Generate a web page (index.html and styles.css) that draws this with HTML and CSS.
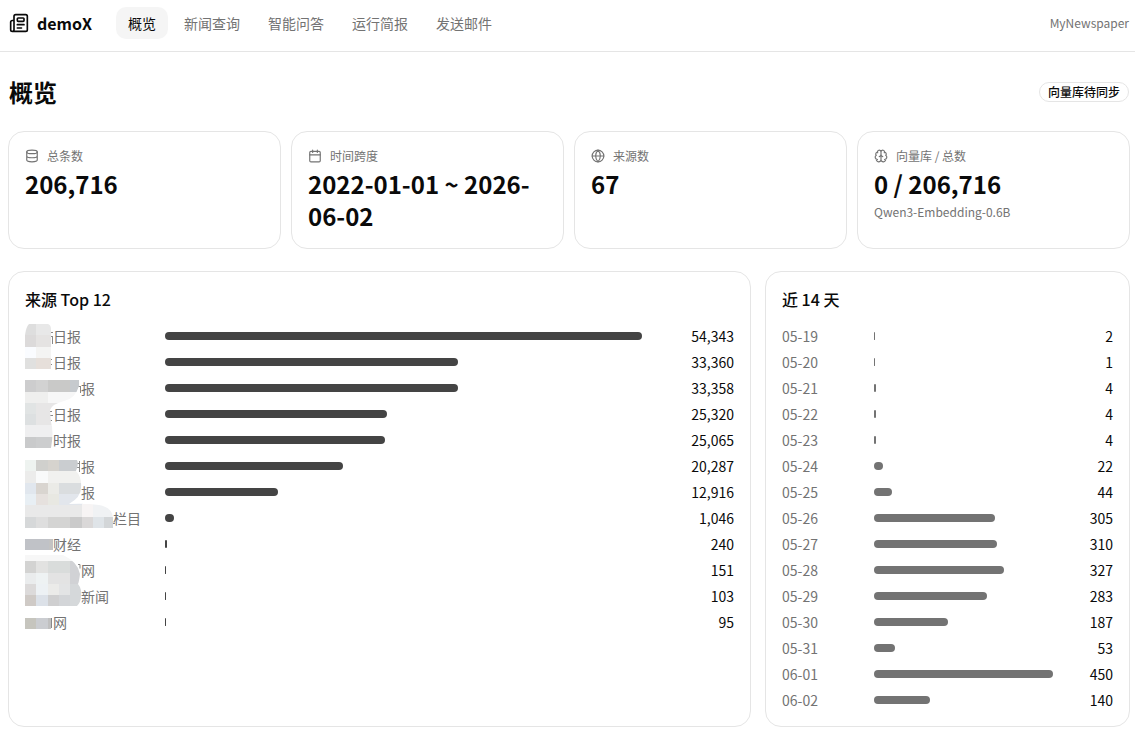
FILE: index.html
```html
<!DOCTYPE html>
<html lang="zh-CN">
<head>
<meta charset="utf-8">
<meta name="viewport" content="width=device-width, initial-scale=1">
<title>demoX</title>
<link rel="stylesheet" href="styles.css">
</head>
<body>
<header class="topbar">
  <a class="brand" href="#">
    <svg class="icon brand-icon" viewBox="0 0 24 24" aria-hidden="true"><path d="M15 18h-5M18 14h-8M4 22h16a2 2 0 0 0 2-2V4a2 2 0 0 0-2-2H8a2 2 0 0 0-2 2v16a2 2 0 0 1-4 0v-9a2 2 0 0 1 2-2h2"/><rect width="8" height="4" x="10" y="6" rx="1"/></svg>
    <span>demoX</span>
  </a>
  <nav class="nav">
    <a class="nav-link active" href="#">概览</a>
    <a class="nav-link" href="#">新闻查询</a>
    <a class="nav-link" href="#">智能问答</a>
    <a class="nav-link" href="#">运行简报</a>
    <a class="nav-link" href="#">发送邮件</a>
  </nav>
  <span class="product">MyNewspaper</span>
</header>
<main class="page">
  <div class="page-head">
    <h1 class="page-title">概览</h1>
    <span class="badge">向量库待同步</span>
  </div>
  <section class="stats">
    <article class="card">
      <div class="stat-label"><svg class="icon" viewBox="0 0 24 24" aria-hidden="true"><ellipse cx="12" cy="5" rx="9" ry="3"/><path d="M3 5v14a9 3 0 0 0 18 0V5M3 12a9 3 0 0 0 18 0"/></svg>总条数</div>
      <div class="stat-value">206,716</div>
    </article>
    <article class="card">
      <div class="stat-label"><svg class="icon" viewBox="0 0 24 24" aria-hidden="true"><path d="M8 2v4M16 2v4M3 10h18"/><rect width="18" height="18" x="3" y="4" rx="2"/></svg>时间跨度</div>
      <div class="stat-value">2022-01-01 ~ 2026-06-02</div>
    </article>
    <article class="card">
      <div class="stat-label"><svg class="icon" viewBox="0 0 24 24" aria-hidden="true"><circle cx="12" cy="12" r="10"/><path d="M12 2a14.500 14.500 0 0 0 0 20 14.500 14.500 0 0 0 0-20M2 12h20"/></svg>来源数</div>
      <div class="stat-value">67</div>
    </article>
    <article class="card">
      <div class="stat-label"><svg class="icon" viewBox="0 0 24 24" aria-hidden="true"><path d="M12 18V5M15 13a4.170 4.170 0 0 1-3-4 4.170 4.170 0 0 1-3 4M17.598 6.500A3 3 0 1 0 12 5a3 3 0 1 0-5.598 1.500M17.997 5.125a4 4 0 0 1 2.526 5.770M18 18a4 4 0 0 0 2-7.464M19.967 17.483A4 4 0 1 1 12 18a4 4 0 1 1-7.967-.517M6 18a4 4 0 0 1-2-7.464M6.003 5.125a4 4 0 0 0-2.526 5.770"/></svg>向量库 / 总数</div>
      <div class="stat-value">0 / 206,716</div>
      <div class="stat-note">Qwen3-Embedding-0.6B</div>
    </article>
  </section>
  <section class="panels">
    <article class="card">
      <h2 class="panel-title">来源 Top 12</h2>
      <div class="masked">
      <ul class="bars sources">
        <li class="row"><span class="name skip-2">日报</span><span class="track"><span class="bar" style="width:100%"></span></span><span class="num">54,343</span></li>
        <li class="row"><span class="name skip-2">日报</span><span class="track"><span class="bar" style="width:61.39%"></span></span><span class="num">33,360</span></li>
        <li class="row"><span class="name skip-4">报</span><span class="track"><span class="bar" style="width:61.38%"></span></span><span class="num">33,358</span></li>
        <li class="row"><span class="name skip-2">日报</span><span class="track"><span class="bar" style="width:46.59%"></span></span><span class="num">25,320</span></li>
        <li class="row"><span class="name skip-2">时报</span><span class="track"><span class="bar" style="width:46.12%"></span></span><span class="num">25,065</span></li>
        <li class="row"><span class="name skip-4">报</span><span class="track"><span class="bar" style="width:37.33%"></span></span><span class="num">20,287</span></li>
        <li class="row"><span class="name skip-4">报</span><span class="track"><span class="bar" style="width:23.77%"></span></span><span class="num">12,916</span></li>
        <li class="row"><span class="name skip-6">栏目</span><span class="track"><span class="bar" style="width:1.92%"></span></span><span class="num">1,046</span></li>
        <li class="row"><span class="name skip-2">财经</span><span class="track"><span class="bar" style="width:0.44%"></span></span><span class="num">240</span></li>
        <li class="row"><span class="name skip-4">网</span><span class="track"><span class="bar" style="width:0.28%"></span></span><span class="num">151</span></li>
        <li class="row"><span class="name skip-4">新闻</span><span class="track"><span class="bar" style="width:0.19%"></span></span><span class="num">103</span></li>
        <li class="row"><span class="name skip-2">网</span><span class="track"><span class="bar" style="width:0.17%"></span></span><span class="num">95</span></li>
      </ul>
      <svg class="mosaic" viewBox="0 0 120 308" width="120" height="308" aria-hidden="true">
        <defs>
          <clipPath id="m1"><path d="M4 0H23Q26 1 26 5V45H0V11Q1 3 4 0Z"/></clipPath>
          <clipPath id="m2"><path d="M0 56H54V62Q50 75 39 77Q27 80 25 86L26 98Q29 108 26 124H0Z"/></clipPath>
          <clipPath id="m3"><path d="M0 136H52Q54 140 51 147Q57 153 56 164Q56 173 44 180Q60 179 74 181Q89 184 88 196V204H0Z"/></clipPath>
          <clipPath id="m4"><path d="M0 231H38Q53 238 55 250Q54 258 53 260Q57 265 56 272Q56 278 52 282H0Z"/></clipPath>
        </defs>
        <g stroke="#888" fill="none"><path d="M25 8.500h3M25 12.500h3M27.500 13v7M25 35.500h2M25 40.500h2M53 62.500h3M55.500 62v7M25 87.500h2M25 91.500h3M25 96.500h2M51 139.500h4M50 143.500h5M54.500 137v11M88 199.500h2M53 240.500h2v4M25 294.500h2M26.500 295v9"/></g>
        <g clip-path="url(#m1)"><path fill="#dedede" d="M0 0h11v11H0z"/><path fill="#e8e8e8" d="M11 0h15v11H11z"/><path fill="#dcdada" d="M0 11h11v12H0z"/><path fill="#e5e3e2" d="M11 11h15v12H11z"/><path fill="#fafcff" d="M0 23h11v11H0z"/><path fill="#f4f4f3" d="M11 23h15v11H11z"/><path fill="#e0e0df" d="M0 34h11v11H0z"/><path fill="#e6dfda" d="M11 34h15v11H11z"/></g>
        <g clip-path="url(#m2)"><path fill="#cdcdce" d="M0 56h11v12H0z"/><path fill="#d2d2d2" d="M11 56h12v12H11z"/><path fill="#c9c9c8" d="M23 56h22v12H23z"/><path fill="#c6cace" d="M45 56h9v12h-9z"/><path fill="#efefee" d="M0 68h23v11H0z"/><path fill="#f7f7f7" d="M23 68h31v11H23z"/><path fill="#e1e4e4" d="M0 79h11v11H0z"/><path fill="#e7e6e6" d="M11 79h28v22H11z"/><path fill="#dde0e1" d="M0 90h11v11H0z"/><path fill="#efeff0" d="M0 101h28v12H0z"/><path fill="#c9cacb" d="M0 113h11v11H0z"/><path fill="#cccdce" d="M11 113h17v11H11z"/></g>
        <g clip-path="url(#m3)"><path fill="#eef3f0" d="M0 136h11v11H0z"/><path fill="#d0d0cd" d="M11 136h12v11H11z"/><path fill="#d6d3ce" d="M23 136h11v11H23z"/><path fill="#cacdd0" d="M34 136h20v11H34z"/><path fill="#ececeb" d="M0 147h11v12H0z"/><path fill="#f9fafa" d="M11 147h12v12H11z"/><path fill="#f1f1ef" d="M23 147h34v12H23z"/><path fill="#e1e7ee" d="M0 159h11v11H0z"/><path fill="#d9d5d0" d="M11 159h12v11H11z"/><path fill="#ebebe7" d="M23 159h11v11H23z"/><path fill="#dadddf" d="M34 159h24v11H34z"/><path fill="#e8eff4" d="M0 170h11v11H0z"/><path fill="#e6e1de" d="M11 170h12v11H11z"/><path fill="#e8e8e2" d="M23 170h11v11H23z"/><path fill="#e2e6ec" d="M34 170h24v11H34z"/><path fill="#e9e9e9" d="M0 181h57v12H0z"/><path fill="#f7f4f4" d="M57 180h11v13H57z"/><path fill="#f0f2f4" d="M68 180h21v13H68z"/><path fill="#d6d8d9" d="M0 193h11v11H0z"/><path fill="#dedede" d="M11 193h12v11H11z"/><path fill="#d4d4d3" d="M23 193h22v11H23z"/><path fill="#cacaca" d="M45 193h12v11H45z"/><path fill="#dad8d8" d="M57 193h11v11H57z"/><path fill="#dfe4e8" d="M68 193h11v11H68z"/><path fill="#d3d6d8" d="M79 193h10v11H79z"/></g>
        <path fill="#c0c2c7" d="M0 215h24v11H0z"/><path fill="#c3c3c3" d="M24 215h4v11h-4z"/>
        <g clip-path="url(#m4)"><path fill="#d3d3d2" d="M0 237h11v12H0z"/><path fill="#e2e2e1" d="M11 237h12v12H11z"/><path fill="#d9dcdb" d="M23 237h22v12H23z"/><path fill="#d1d2d5" d="M45 237h12v23H45z"/><path fill="#f7f7f7" d="M0 231h53v6H0z"/><path fill="#eaeced" d="M0 249h11v11H0z"/><path fill="#eef2f3" d="M11 249h12v11H11z"/><path fill="#e3e3e3" d="M23 249h22v11H23z"/><path fill="#dcdada" d="M0 260h11v11H0z"/><path fill="#edf1f4" d="M11 260h12v11H11z"/><path fill="#ebebe9" d="M23 260h11v11H23z"/><path fill="#e3e4e5" d="M34 260h11v11H34z"/><path fill="#d5d8da" d="M45 260h12v22H45z"/><path fill="#cfcac6" d="M0 271h11v11H0z"/><path fill="#dce1e8" d="M11 271h12v11H11z"/><path fill="#cfcfd0" d="M23 271h11v11H23z"/><path fill="#d3d5d8" d="M34 271h11v11H34z"/></g>
        <path fill="#c6c5be" d="M0 294h11v11H0z"/><path fill="#cbcdd1" d="M11 294h12v11H11z"/><path fill="#c0c0c0" d="M23 294h3v11h-3z"/>
      </svg>
      </div>
    </article>
    <article class="card">
      <h2 class="panel-title">近 14 天</h2>
      <ul class="bars days">
        <li class="row"><span class="name">05-19</span><span class="track"><span class="bar" style="width:0.44%"></span></span><span class="num">2</span></li>
        <li class="row"><span class="name">05-20</span><span class="track"><span class="bar" style="width:0.22%"></span></span><span class="num">1</span></li>
        <li class="row"><span class="name">05-21</span><span class="track"><span class="bar" style="width:0.89%"></span></span><span class="num">4</span></li>
        <li class="row"><span class="name">05-22</span><span class="track"><span class="bar" style="width:0.89%"></span></span><span class="num">4</span></li>
        <li class="row"><span class="name">05-23</span><span class="track"><span class="bar" style="width:0.89%"></span></span><span class="num">4</span></li>
        <li class="row"><span class="name">05-24</span><span class="track"><span class="bar" style="width:4.89%"></span></span><span class="num">22</span></li>
        <li class="row"><span class="name">05-25</span><span class="track"><span class="bar" style="width:9.78%"></span></span><span class="num">44</span></li>
        <li class="row"><span class="name">05-26</span><span class="track"><span class="bar" style="width:67.78%"></span></span><span class="num">305</span></li>
        <li class="row"><span class="name">05-27</span><span class="track"><span class="bar" style="width:68.89%"></span></span><span class="num">310</span></li>
        <li class="row"><span class="name">05-28</span><span class="track"><span class="bar" style="width:72.67%"></span></span><span class="num">327</span></li>
        <li class="row"><span class="name">05-29</span><span class="track"><span class="bar" style="width:62.89%"></span></span><span class="num">283</span></li>
        <li class="row"><span class="name">05-30</span><span class="track"><span class="bar" style="width:41.56%"></span></span><span class="num">187</span></li>
        <li class="row"><span class="name">05-31</span><span class="track"><span class="bar" style="width:11.78%"></span></span><span class="num">53</span></li>
        <li class="row"><span class="name">06-01</span><span class="track"><span class="bar" style="width:100%"></span></span><span class="num">450</span></li>
        <li class="row"><span class="name">06-02</span><span class="track"><span class="bar" style="width:31.11%"></span></span><span class="num">140</span></li>
      </ul>
    </article>
  </section>
</main>
</body>
</html>
```
FILE: styles.css
```css
* { box-sizing: border-box; }

body {
  margin: 0;
  background: #fff;
  color: #0a0a0a;
  font-family: "Noto Sans CJK SC", sans-serif;
  font-size: 14px;
  line-height: 20px;
}

a { color: inherit; text-decoration: none; }
h1, h2, ul { margin: 0; padding: 0; }

.icon {
  flex: none;
  width: 14px;
  height: 14px;
  fill: none;
  stroke: currentColor;
  stroke-width: 2;
  stroke-linecap: round;
  stroke-linejoin: round;
}

.topbar {
  display: flex;
  align-items: center;
  gap: 24px;
  padding: 7px 6px 12px 9px;
  border-bottom: 1px solid #e5e5e5;
}

.brand {
  display: flex;
  align-items: center;
  gap: 8px;
  font-size: 16px;
  font-weight: 600;
}

.brand-icon { width: 20px; height: 20px; }

.nav { display: flex; gap: 4px; }

.nav-link {
  padding: 6px 12px;
  border-radius: 10px;
  color: #737373;
}

.nav-link.active {
  background: #f5f5f5;
  color: #0a0a0a;
}

.product {
  margin-left: auto;
  color: #737373;
  font-size: 12px;
}

.page {
  display: flex;
  flex-direction: column;
  gap: 22px;
  padding: 24px 5px 14px 8px;
}

.page-head {
  display: flex;
  align-items: center;
  justify-content: space-between;
  padding: 0 1px 1px;
}

.page-title {
  font-size: 24px;
  font-weight: 600;
  line-height: 32px;
}

.badge {
  padding: 0 8px;
  border: 1px solid #e5e5e5;
  border-radius: 10px;
  font-size: 12px;
  font-weight: 500;
  line-height: 18px;
}

.stats {
  display: grid;
  grid-template-columns: repeat(4, minmax(0, 1fr));
  gap: 10px;
}

.card {
  padding: 16px;
  border: 1px solid #e5e5e5;
  border-radius: 16px;
}

.stat-label {
  display: flex;
  align-items: center;
  gap: 8px;
  margin-bottom: 4px;
  color: #737373;
  font-size: 12px;
  line-height: 16px;
}

.stat-value {
  font-size: 24px;
  font-weight: 600;
  line-height: 32px;
}

.stat-note {
  margin-top: 2px;
  color: #737373;
  font-size: 12px;
}

.panels {
  display: grid;
  grid-template-columns: minmax(0, 743fr) minmax(0, 365fr);
  gap: 14px;
}

.panel-title {
  margin-bottom: 16px;
  font-size: 16px;
  font-weight: 500;
  line-height: 22px;
}

.bars {
  display: grid;
  gap: 6px;
  list-style: none;
}

.row {
  display: grid;
  align-items: center;
  gap: 12px;
}

.sources .row { grid-template-columns: 128px minmax(0, 1fr) 80px; }
.days .row { grid-template-columns: 80px minmax(0, 1fr) 48px; }

.name { color: #737373; white-space: nowrap; }
.skip-2 { padding-left: 28px; }
.skip-4 { padding-left: 56px; }
.skip-6 { padding-left: 88px; }

.bar {
  display: block;
  height: 8px;
  min-width: 1px;
  border-radius: 4px;
  background: #444;
}

.days .bar { background: #737373; }

.num {
  text-align: right;
  font-variant-numeric: tabular-nums;
}

/* Pixelated mask over the redacted part of the source names */
.masked { position: relative; }

.mosaic {
  position: absolute;
  top: -2px;
  left: 0;
  pointer-events: none;
}
```
